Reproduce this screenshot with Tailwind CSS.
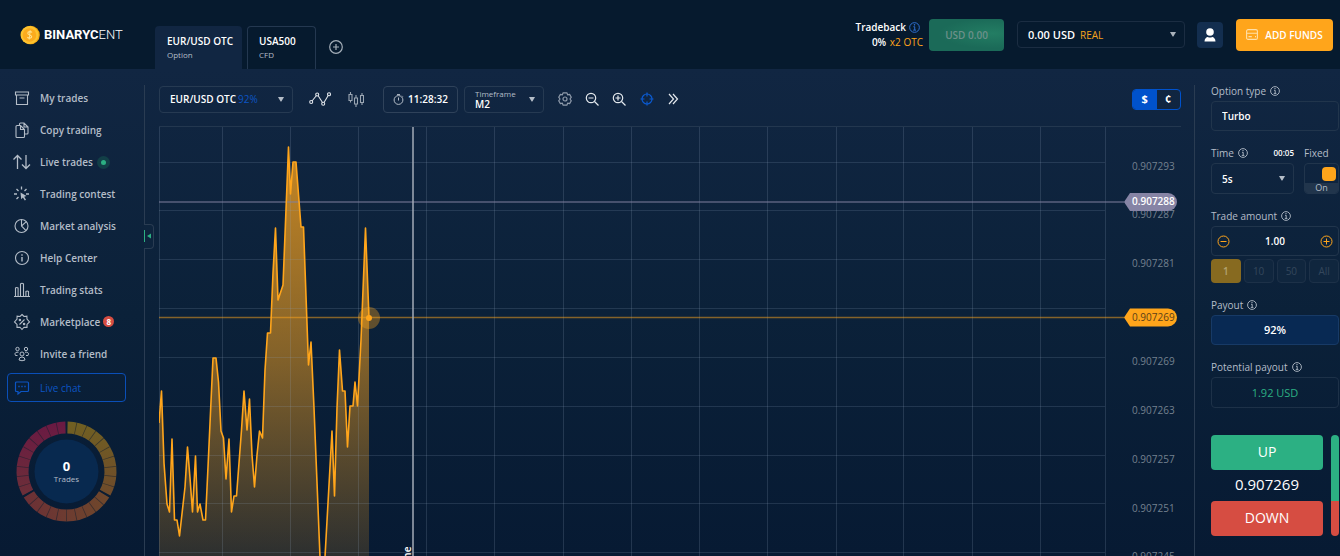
<!DOCTYPE html>
<html lang="en">

<head>
    <meta charset="UTF-8">
    <meta name="viewport" content="width=device-width, initial-scale=1.0">
    <title>Binarycent</title>
    <script src="https://cdn.jsdelivr.net/npm/@tailwindcss/browser@4"></script>
</head>

<body class="h-screen overflow-hidden flex flex-col bg-[#071a33] font-['Open_Sans','Noto_Sans',sans-serif] text-[10px] leading-3 text-[#b4bdc8]">
    <!-- shared icons -->
    <svg class="hidden">
        <symbol id="info" viewBox="0 0 10 10">
            <g fill="none" stroke="currentColor" stroke-width="0.9">
                <circle cx="5" cy="5" r="4.4" />
                <path d="M4 4.3h1.2v3M3.8 7.4h2.6" />
            </g>
            <circle cx="5" cy="2.6" r="0.7" fill="currentColor" />
        </symbol>
        <symbol id="caret" viewBox="0 0 6 5">
            <path d="M0 0h6L3.4 4.6h-.8z" fill="currentColor" />
        </symbol>
    </svg>

    <header class="h-[69px] shrink-0 flex bg-[#061a2e]">
        <a href="#" class="w-[155px] shrink-0 flex items-center pl-5 gap-1">
            <svg class="size-5" viewBox="0 0 20 20">
                <circle cx="10.500" cy="10" r="9.300" fill="#f4a80f" />
                <circle cx="9.500" cy="10" r="9" fill="#fdc32f" />
                <circle cx="9.500" cy="10" r="6.800" fill="#fbab1e" />
                <path d="M12 7.500C11 6 7.500 6.400 7.800 8.400c.3 1.700 3.700 1.300 3.900 3.100.1 1.900-3.300 2.200-4.300.6M10.200 5.300l-1 9.200" fill="none" stroke="#ffe08a" stroke-width="1.100" />
            </svg>
            <span class="font-['Roboto'] text-[13px] leading-4 text-white"><b>BINARYC</b><span class="font-light">ENT</span></span>
        </a>

        <nav class="flex items-end gap-[5px]">
            <a href="#" class="h-[43px] w-[87px] rounded-t bg-[#112642] pl-3 pt-[9px]">
                <span class="block font-semibold text-white">EUR/USD OTC</span>
                <span class="block text-[8px] leading-4">Option</span>
            </a>
            <a href="#" class="h-[43px] w-[69px] rounded-t border border-b-0 border-[#243850] pl-[11px] pt-2">
                <span class="block font-semibold text-white">USA500</span>
                <span class="block text-[8px] leading-4">CFD</span>
            </a>
            <button class="ml-2 mb-[15px]" aria-label="Add tab">
                <svg class="size-[14px]" viewBox="0 0 14 14" fill="none" stroke="#a4aeb8" stroke-width="1.200">
                    <circle cx="7" cy="7" r="6.300" />
                    <path d="M4 7h6M7 4v6" />
                </svg>
            </button>
        </nav>

        <div class="ml-auto flex items-center pr-[7px]">
            <div class="text-right mr-[6px]">
                <div class="flex items-center justify-end gap-[3px] pr-[3px] leading-4 font-semibold text-white">Tradeback
                    <svg class="size-[11px] text-[#2f6fd0]"><use href="#info" /></svg>
                </div>
                <div class="leading-[15px] font-semibold text-white">0% <span class="ml-px font-normal text-[#ffa51b]">x2 OTC</span></div>
            </div>
            <button class="h-8 w-[75px] rounded bg-radial-[at_85%_45%] from-[#237d63] to-[#1b6a58] to-60% font-semibold text-[#6c908a]">USD 0.00</button>
            <button class="ml-[13px] h-[27px] w-[168px] rounded border border-[#1b2d42] flex items-center px-[10px] text-[11px] font-semibold text-white">
                0.00 USD <span class="ml-[5px] text-[10px] font-medium text-[#f5a31c]">REAL</span>
                <svg class="ml-auto -mr-[2px] w-[6px] h-[5px] text-[#a9b2bb]"><use href="#caret" /></svg>
            </button>
            <button class="ml-3 size-[26px] rounded bg-[#132e4f] flex items-center justify-center" aria-label="Profile">
                <svg class="w-[12px] h-[14px]" viewBox="0 0 12 14" fill="#fff">
                    <circle cx="6" cy="4" r="3.800" />
                    <path d="M.5 13.500c0-3 2-4.300 3.300-4.500q2.200 1.200 4.400 0c1.300.2 3.300 1.500 3.300 4.500z" />
                </svg>
            </button>
            <button class="ml-[13px] h-8 w-[97px] rounded bg-[#ffa51b] flex items-center justify-center gap-[7px] font-semibold text-white">
                <svg class="w-[12px] h-[11px]" viewBox="0 0 12 11" fill="none" stroke="#ffdfa8" stroke-width="1.100">
                    <rect x=".6" y=".6" width="10.800" height="9.800" rx="1.500" />
                    <path d="M.6 4.300h10.800M2.500 7.600h3.300M9 7.600h1" />
                </svg>
                ADD FUNDS
            </button>
        </div>
    </header>

    <div class="flex-1 min-h-0 flex pt-4 bg-linear-to-b from-[#112642] via-[#0b2139] to-[#071a33]">
        <!-- side menu -->
        <aside class="relative w-[145px] shrink-0 border-r border-[#2a3c52]">
            <nav class="-mt-[3px] font-semibold">
                <a href="#" class="h-8 flex items-center pl-[13px] gap-[9px]">
                    <svg class="size-[18px]" viewBox="0 0 18 18" fill="none" stroke="currentColor" stroke-width="1.100">
                        <path d="M2.500 3h13v3h-13zM3.500 6v9.500h11V6M6.500 9h5" />
                    </svg>My trades</a>
                <a href="#" class="h-8 flex items-center pl-[13px] gap-[9px]">
                    <svg class="size-[18px]" viewBox="0 0 18 18" fill="none" stroke="currentColor" stroke-width="1.100">
                        <path d="M6.500 4.500V3q0-1 1-1H11l4 4v6q0 1-1 1h-2M11 2v4h4" />
                        <path d="M3 5.500q0-1 1-1h3.500l4 4v7q0 1-1 1H4q-1 0-1-1zM7.500 4.500v4h4M8 5l3 3" />
                    </svg>Copy trading</a>
                <a href="#" class="h-8 flex items-center pl-[13px] gap-[9px]">
                    <svg class="size-[18px]" viewBox="0 0 18 18" fill="none" stroke="currentColor" stroke-width="1.300">
                        <path d="M4.500 16V2.500M.5 6.500l4-4 4 4M13 2v13.500M9 11.500l4 4 4-4" />
                    </svg>Live trades
                    <span class="-ml-[5px] size-[13px] rounded-full bg-[#123f47] flex items-center justify-center"><span class="size-[5px] rounded-full bg-[#2cb083]"></span></span></a>
                <a href="#" class="h-8 flex items-center pl-[13px] gap-[9px]">
                    <svg class="size-[18px]" viewBox="0 0 18 18" fill="none" stroke="currentColor" stroke-width="1.300">
                        <path d="M8.500 1.500v3M3.500 4l2 2M13.500 4l-2 2M1 9h3M13 9h3M3.500 14l2-2" />
                        <path d="M7.500 7.500l6 3.500-2.300.8 1.800 3-1.200.8-1.900-3-1.700 1.700z" fill="currentColor" stroke="none" />
                    </svg>Trading contest</a>
                <a href="#" class="h-8 flex items-center pl-[13px] gap-[9px]">
                    <svg class="size-[18px]" viewBox="0 0 18 18" fill="none" stroke="currentColor" stroke-width="1.100">
                        <circle cx="8.500" cy="9" r="6.500" />
                        <path d="M8.500 2.500V9l4.500 4.700M8.500 9l4.800-4.300" />
                    </svg>Market analysis</a>
                <a href="#" class="h-8 flex items-center pl-[13px] gap-[9px]">
                    <svg class="size-[18px]" viewBox="0 0 18 18" fill="none" stroke="currentColor" stroke-width="1.100">
                        <circle cx="9" cy="9" r="6.500" />
                        <path d="M9 8v4.500M9 5.300v1.400" stroke-width="1.400" />
                    </svg>Help Center</a>
                <a href="#" class="h-8 flex items-center pl-[13px] gap-[9px]">
                    <svg class="size-[18px]" viewBox="0 0 18 18" fill="none" stroke="currentColor" stroke-width="1.100">
                        <path d="M1 15.500h16M2.500 15.500V7q1.300-1 2.600 0v8.500M7.500 15.500V3q1.500-1.500 3 0v12.500M12.900 15.500v-5q1.300-1 2.600 0v5" />
                    </svg>Trading stats</a>
                <a href="#" class="h-[31px] flex items-center pl-[13px] gap-[9px]">
                    <svg class="size-[18px]" viewBox="0 0 18 18" fill="none" stroke="currentColor" stroke-width="1.100">
                        <path d="M9 1.500l2 2 2.900-.3.100 2.900 2.500 2.900-2.500 2.400v3l-3-.2-2 2.300-2-2.300-3 .2v-3L1.500 9 4 6.100l.1-2.900 2.900.3z" />
                        <path d="M6.500 11.500l5-5" />
                        <circle cx="6.900" cy="7" r=".7" />
                        <circle cx="11.100" cy="11" r=".7" />
                    </svg>Marketplace
                    <span class="-ml-[6px] size-[11px] rounded-full bg-[#d64d42] text-[8px] leading-[11px] text-center font-bold text-white">8</span></a>
                <a href="#" class="h-[34px] flex items-center pl-[13px] gap-[9px]">
                    <svg class="size-[18px]" viewBox="0 0 18 18" fill="none" stroke="currentColor" stroke-width="1">
                        <circle cx="4.500" cy="4" r="1.700" />
                        <circle cx="13" cy="4" r="1.700" />
                        <circle cx="9" cy="9" r="2" />
                        <path d="M2.500 10.500Q1 7.500 4 7.200h1.500M2.500 10.500h2M15 10.500q1.500-3-1.500-3.300H12M15 10.500h-2M6 15q0-3 3-3t3 3q-3 1.500-6 0z" />
                    </svg>Invite a friend</a>
            </nav>
            <a href="#" class="mt-[2px] ml-[7px] h-[29px] w-[119px] rounded border border-[#0a4fb8] flex items-center pl-[6px] gap-[10px] text-[#0c55c4]">
                <svg class="size-4" viewBox="0 0 16 16" fill="none" stroke="currentColor" stroke-width="1.200">
                    <path d="M2.500 2h11q1 0 1 1v7.500q0 1-1 1H7L4 14v-2.500H2.500q-1 0-1-1V3q0-1 1-1z" />
                    <path d="M4.300 6.500h1.400M7.300 6.500h1.400M10.300 6.500h1.400" stroke-width="1.500" />
                </svg>Live chat</a>

            <!-- trades wheel -->
            <div class="relative mt-[19px] ml-4 size-[101px] flex flex-col items-center justify-center">
                <svg class="absolute inset-0" viewBox="0 0 101 101" fill="none" stroke-width="12">
                    <defs>
                        <linearGradient id="w1" gradientUnits="userSpaceOnUse" x1="0" y1="0" x2="0" y2="75">
                            <stop offset="0" stop-color="#706022" />
                            <stop offset="1" stop-color="#6f4a2b" />
                        </linearGradient>
                        <linearGradient id="w2" gradientUnits="userSpaceOnUse" x1="8" y1="0" x2="93" y2="0">
                            <stop offset="0" stop-color="#6b2f36" />
                            <stop offset="1" stop-color="#6f482b" />
                        </linearGradient>
                        <linearGradient id="w3" gradientUnits="userSpaceOnUse" x1="0" y1="0" x2="0" y2="75">
                            <stop offset="0" stop-color="#6a1943" />
                            <stop offset="1" stop-color="#6c2f38" />
                        </linearGradient>
                    </defs>
                    <path d="M51.500 6.500A44 44 0 0 1 89.100 71.600" stroke="url(#w1)" />
                    <path d="M88.100 73.400A44 44 0 0 1 12.900 73.400" stroke="url(#w2)" />
                    <path d="M11.900 71.600A44 44 0 0 1 49.500 6.500" stroke="url(#w3)" />
                    <circle cx="50.500" cy="50.500" r="44" pathLength="360" stroke="#14202f" stroke-opacity=".6" stroke-dasharray="1 11" stroke-dashoffset="6.500" />
                    <circle cx="50.500" cy="50.500" r="32" fill="#08294f" />
                </svg>
                <span class="relative text-[13px] leading-[14px] font-bold text-white">0</span>
                <span class="relative text-[8px] leading-[11px]">Trades</span>
            </div>

            <button class="absolute left-full top-[139px] h-[25px] w-[10px] rounded-r border border-l-0 border-[#2a3c52] bg-[#0e243d]" aria-label="Collapse menu">
                <svg class="-mt-px h-3 w-[9px]" viewBox="0 0 9 12" fill="#2cb083">
                    <path d="M0 0h1v12H0zM3 6l4-2.500v5z" />
                </svg>
            </button>
        </aside>

        <main class="flex-1 min-w-0 flex flex-col pl-[14px] pr-[13px]">
            <div class="h-[28px] shrink-0 flex items-center text-white">
                <button class="h-[27px] w-[134px] rounded border border-[#263a52] flex items-center pl-[10px] pr-2 font-semibold">
                    EUR/USD OTC <span class="ml-[2px] font-normal text-[#0c55c4]">92%</span>
                    <svg class="ml-auto w-[6px] h-[5px] text-[#b4bdc8]"><use href="#caret" /></svg>
                </button>
                <button class="ml-4" aria-label="Line chart">
                    <svg class="w-[22px] h-4" viewBox="0 0 22 16" fill="none" stroke="#dfe4ea" stroke-width="1.100">
                        <path d="M3 10l4.500-5.500M9 4.500l4.500 7M15 11.500l4.500-7.500" />
                        <circle cx="2.200" cy="11" r="1.500" />
                        <circle cx="8.200" cy="3.500" r="1.500" />
                        <circle cx="14.200" cy="12.800" r="1.500" />
                        <circle cx="20" cy="3.300" r="1.500" />
                    </svg>
                </button>
                <button class="ml-[17px]" aria-label="Candles">
                    <svg class="w-4 h-[18px]" viewBox="0 0 16 18" fill="none" stroke="#9ba6b3" stroke-width="1.100">
                        <path d="M1 4.500h3v6H1zM6.500 8h3v6h-3zM12.500 5.500h3v7h-3zM2.500 2v2.500M2.500 10.500v2M8 5v3M8 14v3M14 3v2.500M14 12.500v2.500" />
                    </svg>
                </button>
                <div class="ml-[19px] h-[27px] w-[75px] rounded border border-[#2f425a] flex items-center justify-center gap-1 font-semibold">
                    <svg class="size-[11px]" viewBox="0 0 11 11" fill="none" stroke="#b4bdc8">
                        <circle cx="5.500" cy="6" r="4.400" />
                        <path d="M5.500 3.500V6.500M4 .6h3M9 1.800l.8.8" />
                    </svg>11:28:32
                </div>
                <button class="ml-[6px] h-[27px] w-[80px] rounded border border-[#263a52] flex items-center pl-[10px] pr-2 text-left">
                    <span><span class="block text-[8px] leading-[10px] text-[#b4bdc8]">Timeframe</span><span class="block leading-[10px] font-semibold">M2</span></span>
                    <svg class="ml-auto w-[6px] h-[5px] text-[#b4bdc8]"><use href="#caret" /></svg>
                </button>
                <div class="ml-[14px] flex items-center gap-[13px]">
                    <button aria-label="Settings">
                        <svg class="size-[14px]" viewBox="0 0 14 14" fill="none" stroke="#8f9bab" stroke-width="1.200">
                            <path d="M5 .8h4l.6 2 2-.4 1.700 2.800L12 7l1.300 1.800-1.700 2.800-2-.4-.6 2H5l-.6-2-2 .4L.7 8.800 2 7 .7 5.200l1.700-2.800 2 .4z" stroke-linejoin="round" />
                            <circle cx="7" cy="7" r="2" />
                        </svg>
                    </button>
                    <button aria-label="Zoom out">
                        <svg class="size-[14px]" viewBox="0 0 14 14" fill="none" stroke="#e3e8ed" stroke-width="1.200">
                            <circle cx="6" cy="6" r="4.700" />
                            <path d="M9.500 9.500l4 4M3.500 6h5" />
                        </svg>
                    </button>
                    <button aria-label="Zoom in">
                        <svg class="size-[14px]" viewBox="0 0 14 14" fill="none" stroke="#e3e8ed" stroke-width="1.200">
                            <circle cx="6" cy="6" r="4.700" />
                            <path d="M9.500 9.500l4 4M3.500 6h5M6 3.500v5" />
                        </svg>
                    </button>
                    <button class="ml-px" aria-label="Crosshair">
                        <svg class="size-[14px]" viewBox="0 0 14 14" fill="none" stroke="#0b5ad0" stroke-width="1.200">
                            <circle cx="7" cy="7" r="5" />
                            <path d="M7 .5v4M7 9.500v4M.5 7h4M9.500 7h4" />
                        </svg>
                    </button>
                    <button aria-label="More">
                        <svg class="size-[12px]" viewBox="0 0 12 12" fill="none" stroke="#e3e8ed" stroke-width="1.200">
                            <path d="M2 1l4.500 5L2 11M6 1l4.500 5L6 11" />
                        </svg>
                    </button>
                </div>
                <div class="ml-auto h-[21px] w-[49px] rounded border border-[#0052cc] flex overflow-hidden text-[11px] font-bold">
                    <button class="flex-1 bg-[#0052cc]">$</button>
                    <button class="flex-1">¢</button>
                </div>
            </div>

            <!-- chart -->
            <div class="relative mt-[13px] flex-1 min-h-0 flex border-t border-[#23374f]">
                <svg class="flex-1 min-w-0 h-[430px]">
                    <defs>
                        <linearGradient id="area" gradientUnits="userSpaceOnUse" x1="0" y1="20" x2="0" y2="430">
                            <stop offset="0" stop-color="#ffa51b" stop-opacity=".76" />
                            <stop offset=".5" stop-color="#ffa51b" stop-opacity=".5" />
                            <stop offset="1" stop-color="#ffa51b" stop-opacity=".15" />
                        </linearGradient>
                    </defs>
                    <path id="area-fill" fill="url(#area)" />
                    <path stroke="#8fa6c0" stroke-opacity=".2" d="M.5 0v430M63.500 0v430M131.500 0v430M199.500 0v430M267.500 0v430M335.500 0v430M404.500 0v430M472.500 0v430M540.500 0v430M608.500 0v430M677.500 0v430M744.500 0v430M813.500 0v430M881.500 0v430M946.500 0v430" />
                    <path stroke="#8fa6c0" stroke-opacity=".18" d="M0 35.500h946M0 83.500h946M0 132.500h946M0 181.500h946M0 230.500h946M0 279.500h946M0 328.500h946M0 376.500h946M0 425.500h946" />
                    <path d="M0 75h2000" stroke="#8080a0" stroke-opacity=".5" stroke-width="2" />
                    <path d="M0 190.500h2000" stroke="#ffa51b" stroke-opacity=".5" stroke-width="1.500" />
                    <path id="area-line" fill="none" stroke="#ffa51b" stroke-width="1.600" stroke-linejoin="round" />
                    <circle cx="210" cy="191" r="11" fill="#ffa51b" fill-opacity=".35" />
                    <circle cx="210" cy="191" r="3" fill="#ffa51b" />
                    <path d="M254 0v430" stroke="#a3abb7" stroke-width="1.500" />
                    <text transform="translate(252 474) rotate(-90)" font-size="10" font-weight="600" fill="#fff">Expiry time</text>
                </svg>
                <svg class="w-[57px] shrink-0 h-[430px]" font-size="10" fill="#74818f">
                    <text x="8" y="43">0.907293</text>
                    <text x="8" y="91">0.907287</text>
                    <text x="8" y="140">0.907281</text>
                    <text x="8" y="238">0.907269</text>
                    <text x="8" y="287">0.907263</text>
                    <text x="8" y="336">0.907257</text>
                    <text x="8" y="385">0.907251</text>
                    <text x="8" y="433">0.907245</text>
                    <path d="M0 75l6-9h38a9 9 0 0 1 0 18H6z" fill="#8684a5" />
                    <text x="8" y="78" font-weight="600" fill="#fff">0.907288</text>
                    <path d="M0 190.500l6-9h38a9 9 0 0 1 0 18H6z" fill="#ffa51b" />
                    <text x="8" y="194" fill="#5c3f18">0.907269</text>
                </svg>
            </div>
        </main>

        <!-- order panel -->
        <aside class="w-[146px] shrink-0 border-l border-[#2a3c52] pl-4 pr-px">
            <form onsubmit="return false">
                <label for="type" class="flex items-center gap-1">Option type <svg class="size-[10px]"><use href="#info" /></svg></label>
                <input id="type" value="Turbo" readonly class="mt-1 block h-[30px] w-full rounded border border-[#21354c] px-[10px] font-semibold text-white">

                <div class="mt-4 flex gap-[10px]">
                    <div class="w-[83px]">
                        <div class="flex items-center gap-1">
                            <label for="time">Time</label>
                            <svg class="size-[10px]"><use href="#info" /></svg>
                            <span class="ml-auto text-[8px] font-semibold text-white">00:05</span>
                        </div>
                        <div class="relative mt-1">
                            <select id="time" class="block appearance-none h-[31px] w-full rounded border border-[#21354c] px-[10px] font-semibold text-white">
                                <option>5s</option>
                            </select>
                            <svg class="pointer-events-none absolute right-[9px] top-[13px] w-[6px] h-[5px]"><use href="#caret" /></svg>
                        </div>
                    </div>
                    <div class="flex-1">
                        <label for="fixed" class="block">Fixed</label>
                        <label for="fixed" class="mt-1 block h-[31px] rounded border border-[#21354c] overflow-hidden">
                            <input id="fixed" type="checkbox" checked class="appearance-none block ml-[17px] mt-[3px] size-[14px] rounded bg-[#ffa51b]">
                            <span class="mt-[2px] block h-[11px] bg-[#21354c] text-center text-[9px] leading-[10px]">On</span>
                        </label>
                    </div>
                </div>

                <label for="amount" class="mt-4 flex items-center gap-1">Trade amount <svg class="size-[10px]"><use href="#info" /></svg></label>
                <div class="mt-1 h-[30px] rounded border border-[#21354c] flex items-center px-[5px]">
                    <button aria-label="Less">
                        <svg class="size-[13px]" viewBox="0 0 13 13" fill="none" stroke="#ffa51b">
                            <circle cx="6.500" cy="6.500" r="5.500" />
                            <path d="M3.500 6.500h6" />
                        </svg>
                    </button>
                    <input id="amount" value="1.00" class="flex-1 min-w-0 text-center font-semibold text-white">
                    <button aria-label="More">
                        <svg class="size-[13px]" viewBox="0 0 13 13" fill="none" stroke="#ffa51b">
                            <circle cx="6.500" cy="6.500" r="5.500" />
                            <path d="M3.500 6.500h6M6.500 3.500v6" />
                        </svg>
                    </button>
                </div>
                <div class="mt-[3px] h-6 grid grid-cols-4 gap-[3px] text-[#34475c]">
                    <button class="rounded bg-[#876a20] font-semibold text-[#b3a36f]">1</button>
                    <button class="rounded border border-[#1d3148] bg-[#10263e]">10</button>
                    <button class="rounded border border-[#1d3148] bg-[#10263e]">50</button>
                    <button class="rounded border border-[#1d3148] bg-[#10263e]">All</button>
                </div>

                <div class="mt-4 flex items-center gap-1">Payout <svg class="size-[10px]"><use href="#info" /></svg></div>
                <div class="mt-1 h-[30px] rounded border border-[#173a66] bg-[#082953] flex items-center justify-center text-[11px] font-semibold text-white">92%</div>

                <div class="mt-4 flex items-center gap-1">Potential payout <svg class="size-[10px]"><use href="#info" /></svg></div>
                <div class="mt-1 h-[31px] rounded border border-[#1d3148] flex items-center justify-center text-[11px] font-medium text-[#2cb083]">1.92 USD</div>

                <div class="mt-[27px] flex gap-2 text-[14px] text-white">
                    <div class="w-28 shrink-0 text-center">
                        <button class="block h-[35px] w-full rounded bg-[#2cb083] pb-[2px]">UP</button>
                        <div class="pb-[3px] text-[15px] leading-[28px]">0.907269</div>
                        <button class="block h-[35px] w-full rounded bg-[#d64d42] pb-[2px]">DOWN</button>
                    </div>
                    <div class="flex-1 rounded overflow-hidden flex flex-col">
                        <div class="h-[66px] bg-[#2cb083]"></div>
                        <div class="flex-1 bg-[#d64d42]"></div>
                    </div>
                </div>
            </form>
        </aside>
    </div>

    <script>
        // tick prices as x,y in chart pixels
        let ticks = "0,296 2.5,264 5,336 8,377 10.500,385 13,312 15.500,393 18,393 20.500,409 26,360 28.500,320 31,351 33.500,385 36.500,329 38.500,385 41,377 44,393 46.500,393 49,340 54,231 57,231 59.500,255 62,304 64.500,311 67,352 70,312 72.500,385 75,369 77.500,369 82.500,303 85,264 88,303 90.500,272 93,328 95.500,360 98,328 100.500,304 103.500,311 106,243 108.500,206 111.500,206 114,146 116.500,101 119,173 124,158 129.500,20 131.500,67 134,35 137,35 142,100 144.500,100 149.500,238 152,215 155,281 161,430 166,430 173,304 175.500,369 178,281 180.500,223 183.500,264 186,264 188.500,320 191,279 194,279 196,255 198.500,279 202,213 206.500,101 210,191";
        document.getElementById('area-line').setAttribute('d', 'M' + ticks);
        document.getElementById('area-fill').setAttribute('d', 'M' + ticks + ' 210,430 0,430z');
    </script>
</body>

</html>
